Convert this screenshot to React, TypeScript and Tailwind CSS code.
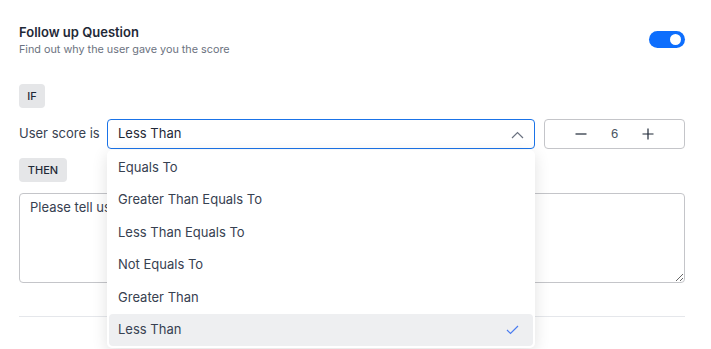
import React from "react";

const items = [
  "Equals To",
  "Greater Than Equals To",
  "Less Than Equals To",
  "Not Equals To",
  "Greater Than",
  "Less Than",
];

export default function App() {
  return (
    <div
      className="relative w-[711px] h-[349px] bg-white overflow-hidden text-[#374151]"
      style={{ fontFamily: "Inter, 'Liberation Sans', sans-serif" }}
    >
      <div className="pl-[19px] pr-[26px] pt-[23px]">
        <div className="flex items-start justify-between">
          <div>
            <div className="text-[13px] font-semibold text-[#1f2937] leading-[18px]">Follow up Question</div>
            <div className="text-[10.8px] text-[#6b7280] leading-[14px] mt-[2px]">Find out why the user gave you the score</div>
          </div>
          <div className="mt-[8px] w-[36px] h-[17px] rounded-full bg-[#0d6efd] flex items-center justify-end pr-[4px]">
            <div className="w-[11px] h-[11px] rounded-full bg-white" />
          </div>
        </div>

        <div className="mt-[27px] inline-flex items-center justify-center w-[26px] h-[24px] rounded-[4px] bg-[#e5e6e8] text-[11px] font-medium text-[#1f2937]">IF</div>

        <div className="mt-[11px] flex items-center h-[30px]">
          <div className="w-[88px] text-[13px] text-[#374151]">User score is</div>
          <div className="relative w-[428px] h-[30px] border border-[#1a73e8] rounded-[4px] flex items-center justify-between pl-[10px] pr-[10px]">
            <span className="text-[13px] text-[#1f2937]">Less Than</span>
            <svg width="13" height="8" viewBox="0 0 13 8" className="mt-[2px]">
              <path d="M1 7 L6.5 1.5 L12 7" fill="none" stroke="#6b7280" strokeWidth="1.2" />
            </svg>
          </div>
          <div className="ml-[9px] w-[141px] h-[30px] border border-[#c4c5c9] rounded-[4px] flex items-center justify-center gap-[24px] text-[#1f2937]">
            <svg width="12" height="12" viewBox="0 0 12 12"><path d="M0.5 6 H11.5" stroke="#1f2937" strokeWidth="1.2" /></svg>
            <span className="text-[13px] text-[#4b5563]" style={{ fontFamily: "'Liberation Sans', Arial, sans-serif" }}>6</span>
            <svg width="12" height="12" viewBox="0 0 12 12"><path d="M0.5 6 H11.5 M6 0.5 V11.5" stroke="#1f2937" strokeWidth="1.2" /></svg>
          </div>
        </div>

        <div className="mt-[9px] inline-flex items-center justify-center w-[48px] h-[24px] rounded-[4px] bg-[#e5e6e8] text-[11px] font-medium text-[#1f2937]">THEN</div>

        <textarea
          className="mt-[11px] block w-[666px] h-[90px] border border-[#c4c5c9] rounded-[4px] px-[10px] py-[4px] text-[13px] text-[#374151] outline-none"
          defaultValue="Please tell us more about your score"
          style={{ fontFamily: "Inter, 'Liberation Sans', sans-serif" }}
        />

        <div className="mt-[33px] h-px bg-[#e5e7eb] w-[666px]" />
      </div>

      <div className="absolute left-[107px] top-[150px] w-[428px] h-[198px] bg-white rounded-[5px] shadow-[0_4px_16px_rgba(0,0,0,0.12)] px-[2px] pt-[1px]">
        {items.map((it, i) => {
          const sel = i === items.length - 1;
          return (
            <div
              key={it}
              className={`h-[32.5px] flex items-center justify-between pl-[9px] pr-[14px] rounded-[4px] text-[13px] text-[#374151] ${sel ? "bg-[#eeeff1]" : ""}`}
            >
              <span>{it}</span>
              {sel && (
                <svg width="13" height="10" viewBox="0 0 13 10">
                  <path d="M1 5 L4.5 8.5 L12 1" fill="none" stroke="#4a7cf0" strokeWidth="1.2" />
                </svg>
              )}
            </div>
          );
        })}
      </div>
    </div>
  );
}
